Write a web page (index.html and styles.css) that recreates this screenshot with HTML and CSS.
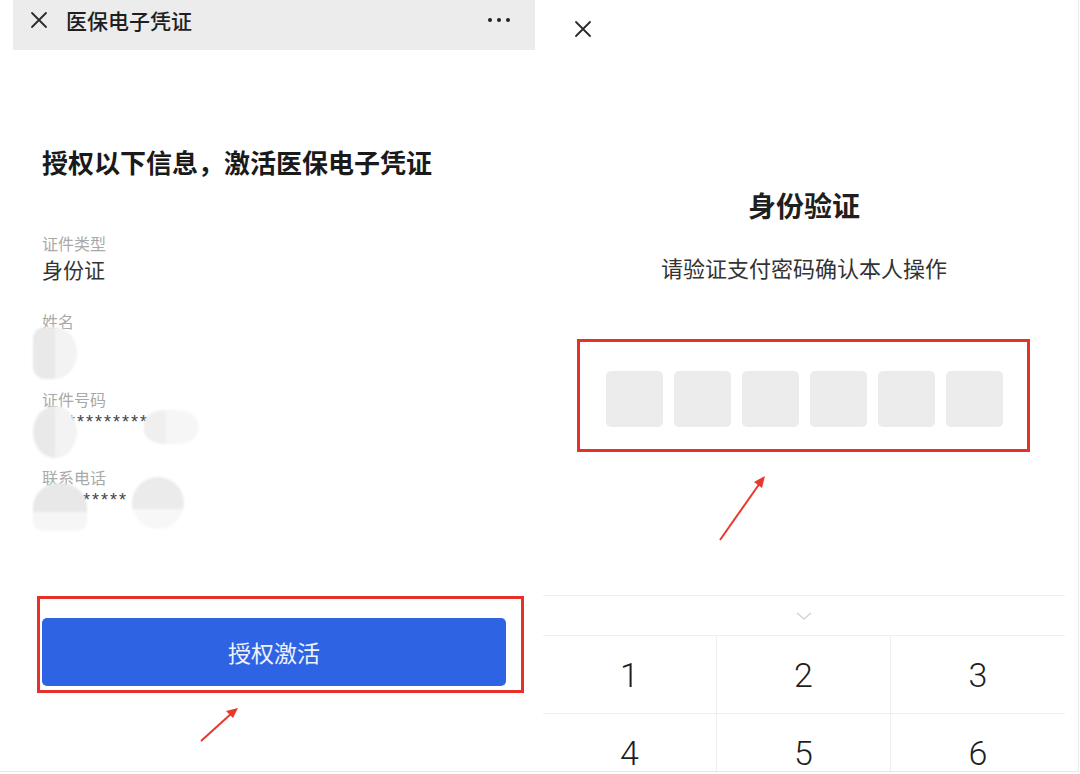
FILE: index.html
```html
<!DOCTYPE html>
<html lang="zh-CN">
<head>
  <meta charset="UTF-8" />
  <meta name="viewport" content="width=device-width, initial-scale=1.0" />
  <title>医保电子凭证 激活步骤</title>
  <link rel="stylesheet" href="styles.css">
</head>
<body>
  <div class="sheet">
    <!-- Step 1: authorise -->
    <div class="phone auth">
      <div class="nav-bar">
        <svg class="close-icon" viewBox="0 0 18 18"><path d="M2 2 L16 16 M16 2 L2 16" /></svg>
        <span class="nav-title">医保电子凭证</span>
        <span class="more"><i></i><i></i><i></i></span>
      </div>

      <h1 class="auth-title">授权以下信息，激活医保电子凭证</h1>

      <div class="field">
        <div class="field-label">证件类型</div>
        <div class="field-value">身份证</div>
      </div>
      <div class="field">
        <div class="field-label">姓名</div>
        <div class="field-value"></div>
      </div>
      <div class="field">
        <div class="field-label">证件号码</div>
        <div class="field-value stars id-stars">*********</div>
      </div>
      <div class="field">
        <div class="field-label">联系电话</div>
        <div class="field-value stars phone-stars">*****</div>
      </div>

      <button class="primary-button">授权激活</button>

      <!-- mosaic over private info -->
      <div class="blur blur-name"></div>
      <div class="blur blur-id-a"></div>
      <div class="blur blur-id-b"></div>
      <div class="blur blur-tel-a"></div>
      <div class="blur blur-tel-b"></div>

      <div class="mark mark-button"></div>
    </div>

    <!-- Step 2: payment password -->
    <div class="phone verify">
      <svg class="close-icon verify-close" viewBox="0 0 18 18"><path d="M2 2 L16 16 M16 2 L2 16" /></svg>

      <h2 class="verify-title">身份验证</h2>
      <p class="verify-sub">请验证支付密码确认本人操作</p>

      <div class="pin-row">
        <span class="pin"></span>
        <span class="pin"></span>
        <span class="pin"></span>
        <span class="pin"></span>
        <span class="pin"></span>
        <span class="pin"></span>
      </div>

      <div class="keyboard">
        <div class="kb-toggle">
          <svg viewBox="0 0 16 8"><path d="M1 1 L8 7 L15 1" /></svg>
        </div>
        <div class="kb-grid">
          <div class="key">1</div>
          <div class="key">2</div>
          <div class="key">3</div>
          <div class="key">4</div>
          <div class="key">5</div>
          <div class="key">6</div>
        </div>
      </div>

      <div class="mark mark-pin"></div>
    </div>

    <!-- red guide arrows -->
    <svg class="arrow arrow-left" viewBox="0 0 1080 774">
      <path d="M201 741 L232 713" />
      <polygon points="238,708 226,711 233,718" />
    </svg>
    <svg class="arrow arrow-right" viewBox="0 0 1080 774">
      <path d="M720 540 L760 483" />
      <polygon points="765,476 754,482 762,488" />
    </svg>
  </div>
</body>
</html>
```

FILE: styles.css
```css
body {
  margin: 0;
  background: #fff;
  font-family: "Noto Sans CJK SC", "Noto Sans", sans-serif;
  color: #1a1a1a;
}

/* Whole picture: two phone screens side by side */
.sheet {
  position: relative;
  width: 1065px;
  height: 771px;
  padding-left: 13px;
  display: flex;
  gap: 8px;
  border-right: 1px solid #ebebeb;
  border-bottom: 1px solid #e6e6e6;
  overflow: hidden;
}

.phone {
  position: relative;
  width: 522px;
  flex: none;
  display: flex;
  flex-direction: column;
  background: #fff;
  overflow: hidden;
}

.phone > * {
  flex-shrink: 0;
}

.close-icon {
  width: 18px;
  height: 18px;
  fill: none;
  stroke: #2b2b2b;
  stroke-width: 1.8;
  stroke-linecap: round;
}

/* Left: nav bar */
.nav-bar {
  height: 40px;
  padding: 0 25px 10px 17px;
  background: #ececec;
  display: flex;
  align-items: center;
}

.nav-title {
  margin-left: 18px;
  font-size: 21px;
  font-weight: 500;
  color: #1f1f1f;
}

.more {
  margin-left: auto;
  display: flex;
  gap: 5px;
}

.more i {
  width: 4px;
  height: 4px;
  border-radius: 50%;
  background: #222;
}

.auth-title {
  margin: 94px 0 53px 29px;
  font-size: 26px;
  line-height: 36px;
  font-weight: 700;
  color: #1a1a1a;
}

.field {
  margin-left: 29px;
  margin-bottom: 26px;
}

.field-label {
  font-size: 16px;
  line-height: 20px;
  color: #a9a9a9;
}

.field-value {
  height: 32px;
  font-size: 21px;
  line-height: 32px;
  color: #333;
}

.stars {
  font-family: "Liberation Sans", sans-serif;
  font-size: 18px;
  line-height: 26px;
  letter-spacing: 2px;
  color: #444;
}

.id-stars { padding-left: 26px; }
.phone-stars { padding-left: 41px; }

.primary-button {
  margin: auto 29px 85px;
  height: 68px;
  border: none;
  border-radius: 5px;
  background: #2e64e4;
  color: #eef2fd;
  font-family: inherit;
  font-size: 23px;
}

/* Mosaic blobs hiding personal data */
.blur {
  position: absolute;
  border-radius: 50%;
  filter: blur(1px);
  background: linear-gradient(to right, #e9e9e9 50%, #f3f3f3 50%);
}

.blur-name { left: 20px; top: 327px; width: 44px; height: 52px; border-radius: 12px 50% 50% 12px; }
.blur-id-a { left: 20px; top: 406px; width: 44px; height: 52px; }
.blur-id-b { left: 131px; top: 410px; width: 54px; height: 34px; border-radius: 40%; background: linear-gradient(to right, #efefef 40%, #f6f6f6 40%); }
.blur-tel-a { left: 20px; top: 483px; width: 54px; height: 48px; border-radius: 50% 50% 20% 20%; background: linear-gradient(#e8e8e8 60%, #f6f6f6 60%); }
.blur-tel-b { left: 119px; top: 477px; width: 52px; height: 52px; background: linear-gradient(#ebebeb 62%, #f7f7f7 62%); }

/* Red annotation frames */
.mark {
  position: absolute;
  border: 3px solid #e7302a;
  box-sizing: border-box;
}

.mark-button { left: 24px; top: 596px; width: 487px; height: 97px; }
.mark-pin { left: 34px; top: 339px; width: 453px; height: 113px; }

/* Right: verification */
.verify { align-items: center; }

.verify-close {
  align-self: flex-start;
  margin: 20px 0 0 31px;
}

.verify-title {
  margin: 149px 0 0;
  font-size: 28px;
  line-height: 36px;
  font-weight: 700;
  color: #1f1f1f;
}

.verify-sub {
  margin: 29px 0 0;
  font-size: 22px;
  line-height: 30px;
  color: #333;
}

.pin-row {
  margin-top: 89px;
  display: flex;
  gap: 11px;
}

.pin {
  width: 57px;
  height: 56px;
  border-radius: 5px;
  background: #ececec;
}

.keyboard {
  align-self: stretch;
  margin-top: 168px;
  border-top: 1px solid #efefef;
}

.kb-toggle {
  height: 39px;
  display: flex;
  justify-content: center;
  align-items: center;
  border-bottom: 1px solid #efefef;
}

.kb-toggle svg {
  width: 16px;
  height: 8px;
  fill: none;
  stroke: #cfcfcf;
  stroke-width: 1.2;
}

.kb-grid {
  display: grid;
  grid-template-columns: repeat(3, 1fr);
}

.key {
  height: 77px;
  display: flex;
  align-items: center;
  justify-content: center;
  font-family: "Roboto", sans-serif;
  font-size: 34px;
  font-weight: 300;
  color: #1f1f1f;
  border-bottom: 1px solid #efefef;
  border-right: 1px solid #efefef;
}

.key:nth-child(3n) { border-right: none; }

/* Guide arrows */
.arrow {
  position: absolute;
  left: 0;
  top: 0;
  width: 1080px;
  height: 774px;
  pointer-events: none;
}

.arrow path {
  fill: none;
  stroke: #e8392c;
  stroke-width: 2;
}

.arrow polygon { fill: #e8392c; }
```
